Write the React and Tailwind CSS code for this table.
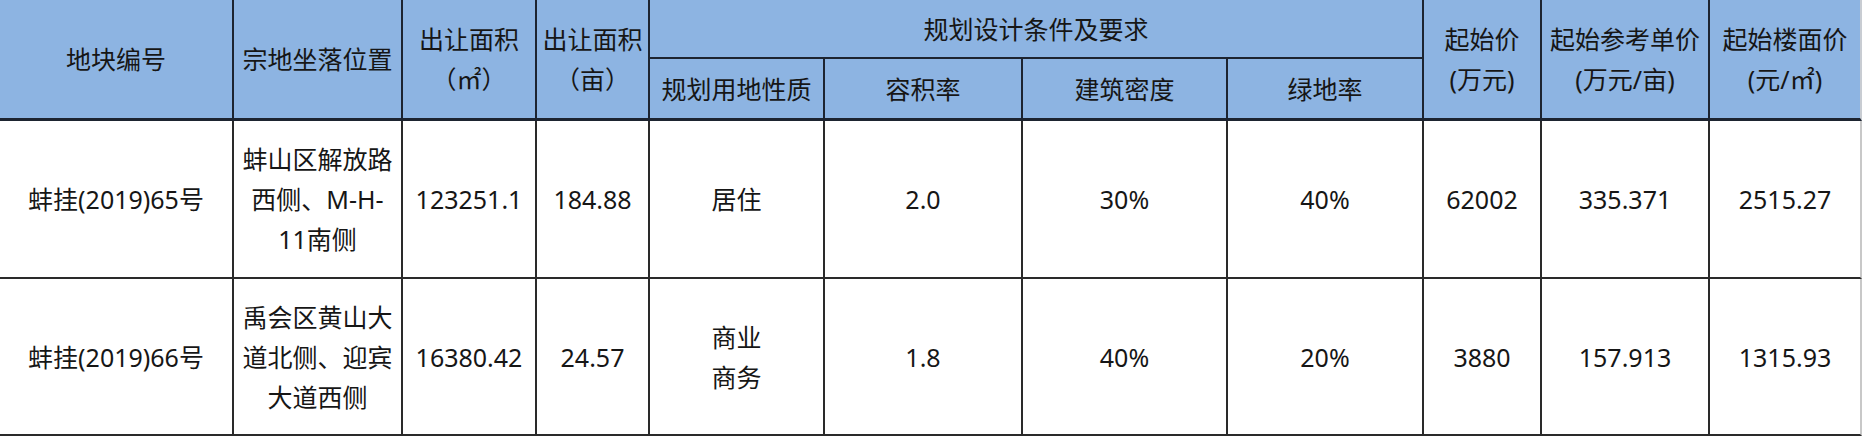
import React from "react";

const H = "border-r-2 border-b-2 border-[#1d2430] text-center align-middle font-normal px-1";
const D = "border-r-2 border-b-2 border-[#2a2a2a] text-center align-middle px-1";

export default function App() {
  return (
    <div className="w-[1864px] h-[437px] bg-white overflow-hidden text-[#161616] text-[25px] leading-[40px]" style={{ fontFamily: "'Noto Sans', 'Noto Sans CJK SC', sans-serif" }}>
      <table className="table-fixed border-separate border-spacing-0 w-[1862px]">
        <colgroup>
          <col className="w-[234px]" />
          <col className="w-[169px]" />
          <col className="w-[134px]" />
          <col className="w-[113px]" />
          <col className="w-[175px]" />
          <col className="w-[198px]" />
          <col className="w-[205px]" />
          <col className="w-[196px]" />
          <col className="w-[118px]" />
          <col className="w-[168px]" />
          <col className="w-[152px]" />
        </colgroup>
        <thead className="bg-[#8db4e2]">
          <tr className="h-[59px]">
            <th rowSpan={2} className={H + " border-b-[3px]"}>地块编号</th>
            <th rowSpan={2} className={H + " border-b-[3px]"}>宗地坐落位置</th>
            <th rowSpan={2} className={H + " border-b-[3px]"}>出让面积<br />（㎡）</th>
            <th rowSpan={2} className={H + " border-b-[3px]"}>出让面积<br />（亩）</th>
            <th colSpan={4} className={H}>规划设计条件及要求</th>
            <th rowSpan={2} className={H + " border-b-[3px]"}>起始价<br />(万元)</th>
            <th rowSpan={2} className={H + " border-b-[3px]"}>起始参考单价<br />(万元/亩)</th>
            <th rowSpan={2} className={H + " border-b-[3px] border-r-[#c8ccd2]"}>起始楼面价<br />(元/㎡)</th>
          </tr>
          <tr className="h-[62px]">
            <th className={H + " border-b-[3px]"}>规划用地性质</th>
            <th className={H + " border-b-[3px]"}>容积率</th>
            <th className={H + " border-b-[3px]"}>建筑密度</th>
            <th className={H + " border-b-[3px]"}>绿地率</th>
          </tr>
        </thead>
        <tbody>
          <tr className="h-[158px]">
            <td className={D}>蚌挂(2019)65号</td>
            <td className={D}>蚌山区解放路<br />西侧、M-H-<br />11南侧</td>
            <td className={D}>123251.1</td>
            <td className={D}>184.88</td>
            <td className={D}>居住</td>
            <td className={D}>2.0</td>
            <td className={D}>30%</td>
            <td className={D}>40%</td>
            <td className={D}>62002</td>
            <td className={D}>335.371</td>
            <td className={D + " border-r-[#c8c8c8]"}>2515.27</td>
          </tr>
          <tr className="h-[157px]">
            <td className={D}>蚌挂(2019)66号</td>
            <td className={D}>禹会区黄山大<br />道北侧、迎宾<br />大道西侧</td>
            <td className={D}>16380.42</td>
            <td className={D}>24.57</td>
            <td className={D}>商业<br />商务</td>
            <td className={D}>1.8</td>
            <td className={D}>40%</td>
            <td className={D}>20%</td>
            <td className={D}>3880</td>
            <td className={D}>157.913</td>
            <td className={D + " border-r-[#c8c8c8]"}>1315.93</td>
          </tr>
        </tbody>
      </table>
    </div>
  );
}
